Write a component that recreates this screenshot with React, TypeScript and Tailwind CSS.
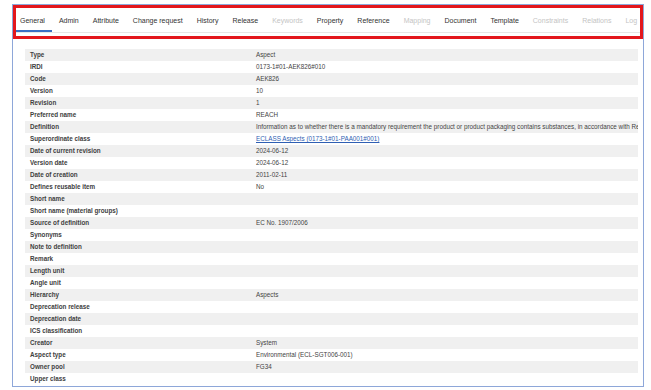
import React from "react";

const tabs: { label: string; active?: boolean; disabled?: boolean }[] = [
  { label: "General", active: true },
  { label: "Admin" },
  { label: "Attribute" },
  { label: "Change request" },
  { label: "History" },
  { label: "Release" },
  { label: "Keywords", disabled: true },
  { label: "Property" },
  { label: "Reference" },
  { label: "Mapping", disabled: true },
  { label: "Document" },
  { label: "Template" },
  { label: "Constraints", disabled: true },
  { label: "Relations", disabled: true },
  { label: "Log", disabled: true },
];

const rows: { label: string; value?: string; link?: boolean }[] = [
  { label: "Type", value: "Aspect" },
  { label: "IRDI", value: "0173-1#01-AEK826#010" },
  { label: "Code", value: "AEK826" },
  { label: "Version", value: "10" },
  { label: "Revision", value: "1" },
  { label: "Preferred name", value: "REACH" },
  {
    label: "Definition",
    value:
      "Information as to whether there is a mandatory requirement the product or product packaging contains substances, in accordance with Regulation (EC) No. 1907/2006",
  },
  { label: "Superordinate class", value: "ECLASS Aspects (0173-1#01-PAA001#001)", link: true },
  { label: "Date of current revision", value: "2024-06-12" },
  { label: "Version date", value: "2024-06-12" },
  { label: "Date of creation", value: "2011-02-11" },
  { label: "Defines reusable item", value: "No" },
  { label: "Short name" },
  { label: "Short name (material groups)" },
  { label: "Source of definition", value: "EC No. 1907/2006" },
  { label: "Synonyms" },
  { label: "Note to definition" },
  { label: "Remark" },
  { label: "Length unit" },
  { label: "Angle unit" },
  { label: "Hierarchy", value: "Aspects" },
  { label: "Deprecation release" },
  { label: "Deprecation date" },
  { label: "ICS classification" },
  { label: "Creator", value: "System" },
  { label: "Aspect type", value: "Environmental (ECL-SGT006-001)" },
  { label: "Owner pool", value: "FG34" },
  { label: "Upper class" },
];

export default function App() {
  return (
    <div
      className="w-[651px] h-[390px] bg-white overflow-hidden pt-[4px] pl-[12px]"
      style={{ fontFamily: "'Liberation Sans', Arial, sans-serif" }}
    >
      <div className="relative w-[632px] h-[383px] border border-[#8ea7d9] bg-white">
        <div className="flex border-b border-[#e6e6e6] h-[28px]">
          {tabs.map((t) => (
            <div
              key={t.label}
              className={
                "px-[7px] pt-[12px] pb-[5px] leading-[8px] text-[7px] whitespace-nowrap border-b-2 " +
                (t.active
                  ? "border-[#3a6fc4] text-[#333]"
                  : t.disabled
                  ? "border-transparent text-[#c4c4c4]"
                  : "border-transparent text-[#333]")
              }
            >
              {t.label}
            </div>
          ))}
        </div>

        <div className="mt-[16px] ml-[12px] mr-[5px]">
          {rows.map((r, i) => (
            <div
              key={r.label}
              className={
                "grid grid-cols-[226px_1fr] h-[12px] leading-[12px] text-[6.3px] " +
                (i % 2 === 0 ? "bg-[#f0f0f0]" : "bg-white")
              }
            >
              <div className="pl-[5px] font-bold text-[#404040] whitespace-nowrap overflow-hidden">
                {r.label}
              </div>
              <div className="pl-[5px] text-[#444] whitespace-nowrap overflow-hidden">
                {r.link ? (
                  <span className="text-[#2f5fb3] underline">{r.value}</span>
                ) : (
                  r.value
                )}
              </div>
            </div>
          ))}
        </div>

        <div className="pointer-events-none absolute left-0 top-0 w-[630px] h-[34px] border-[3px] border-[#e3161c]" />
      </div>
    </div>
  );
}
